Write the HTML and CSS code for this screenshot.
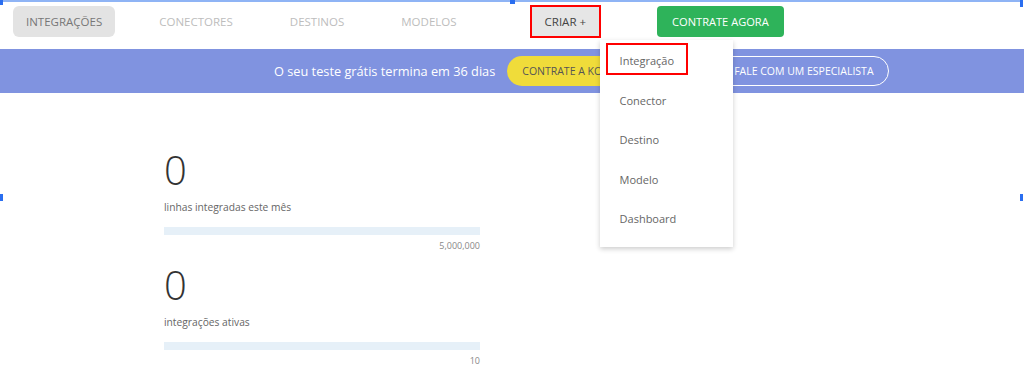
FILE: index.html
```html
<!DOCTYPE html>
<html lang="pt-BR">
<head>
    <meta charset="UTF-8">
    <title>Kondado</title>
    <link rel="stylesheet" href="styles.css">
</head>
<body>

    <div class="topbar">
        <a class="nav-link active">INTEGRAÇÕES</a>
        <a class="nav-link">CONECTORES</a>
        <a class="nav-link">DESTINOS</a>
        <a class="nav-link">MODELOS</a>
        <div class="criar-wrap">
            <button class="btn-criar mark">CRIAR +</button>
            <!-- menu aberto -->
            <div class="dropdown">
                <a class="dropdown-item mark">Integração</a>
                <a class="dropdown-item">Conector</a>
                <a class="dropdown-item">Destino</a>
                <a class="dropdown-item">Modelo</a>
                <a class="dropdown-item">Dashboard</a>
            </div>
        </div>
        <button class="btn-contrate">CONTRATE AGORA</button>
    </div>

    <div class="trial-banner">
        <span class="trial-text">O seu teste grátis termina em 36 dias</span>
        <button class="btn-yellow">CONTRATE A KONDADO</button>
        <button class="btn-outline">FALE COM UM ESPECIALISTA</button>
    </div>

    <div class="stats">
        <div class="stat">
            <div class="stat-number">0</div>
            <div class="stat-label">linhas integradas este mês</div>
            <div class="stat-bar"><div class="stat-fill" style="width: 0%;"></div></div>
            <div class="stat-limit">5,000,000</div>
        </div>
        <div class="stat">
            <div class="stat-number">0</div>
            <div class="stat-label">integrações ativas</div>
            <div class="stat-bar"><div class="stat-fill" style="width: 0%;"></div></div>
            <div class="stat-limit">10</div>
        </div>
    </div>

    <!-- moldura de seleção -->
    <div class="sel-frame">
        <span class="handle h-tl"></span>
        <span class="handle h-tm"></span>
        <span class="handle h-tr"></span>
        <span class="handle h-ml"></span>
        <span class="handle h-mr"></span>
    </div>

</body>
</html>
```

FILE: styles.css
```css
/* base */
body {
    margin: 0;
    font-family: "Open Sans", "Liberation Sans", sans-serif;
    background: #fff;
    position: relative;
    height: 388px;
    overflow: hidden;
}

/* barra superior */
.topbar {
    height: 49px;
    display: flex;
    align-items: flex-start;
    padding: 6px 0 0 13px;
    box-sizing: border-box;
}

.nav-link {
    font-size: 11.5px;
    color: #bdbdbd;
    height: 31px;
    line-height: 31px;
    padding: 0 13px;
    margin-right: 31px;
    border-radius: 6px;
}

.nav-link.active {
    background-color: #e3e3e3;
    color: #777;
}

.criar-wrap {
    position: relative;
    margin-left: 29px;
}

.btn-criar {
    font-family: inherit;
    font-size: 11.5px;
    color: #444;
    background-color: #e6e6e6;
    border: none;
    height: 33px;
    padding: 0 15px;
    margin-top: -1px;
}

.mark {
    outline: 2px solid #ff0000;
    outline-offset: -2px;
}

.btn-contrate {
    font-family: inherit;
    font-size: 11.1px;
    color: #fff;
    background-color: #2eb35a;
    border: none;
    border-radius: 4px;
    height: 31px;
    padding: 0 15px;
    margin-left: 56px;
}

/* menu suspenso */
.dropdown {
    position: absolute;
    top: 34px;
    left: 70px;
    width: 133px;
    padding: 3px 0 6px;
    background: #fff;
    box-shadow: 0 2px 5px rgba(0, 0, 0, 0.2);
    z-index: 5;
}

.dropdown-item {
    display: block;
    font-size: 11px;
    color: #666;
    height: 32px;
    line-height: 36px;
    padding-left: 14px;
    margin: 0 45px 7.5px 6px;
    box-sizing: border-box;
}

.dropdown-item:not(.mark) {
    margin-right: 0;
}

/* faixa de teste */
.trial-banner {
    height: 44px;
    background-color: #8093e0;
    display: flex;
    align-items: center;
    padding-left: 274px;
}

.trial-text {
    color: #fff;
    font-size: 12.75px;
    margin-right: 12px;
}

.btn-yellow {
    font-family: inherit;
    font-size: 10.5px;
    color: #555;
    background-color: #f0dc3a;
    border: none;
    border-radius: 15px;
    height: 30px;
    padding: 0 15px;
}

.btn-outline {
    font-family: inherit;
    font-size: 10.5px;
    color: #fff;
    background: transparent;
    border: 1px solid #fff;
    border-radius: 15px;
    height: 30px;
    padding: 0 14px 0 18px;
    margin-left: 60px;
}

/* numeros */
.stats {
    width: 316px;
    margin-left: 164px;
    padding-top: 53px;
}

.stat {
    margin-bottom: 9px;
}

.stat-number {
    font-size: 40px;
    font-weight: 300;
    color: #333;
    line-height: 48px;
}

.stat-label {
    font-size: 10.25px;
    color: #666;
    margin-top: 6px;
}

.stat-bar {
    height: 8px;
    background-color: #e6f0f8;
    margin-top: 13px;
}

.stat-fill {
    height: 100%;
    background-color: #8093e0;
}

.stat-limit {
    text-align: right;
    font-size: 9px;
    color: #888;
    margin-top: 4px;
}

/* moldura de seleção */
.sel-frame {
    position: absolute;
    left: 0;
    top: 0;
    width: 1021px;
    height: 196px;
    border-top: 2px solid #8fb4f5;
    box-sizing: border-box;
    pointer-events: none;
}

.handle {
    position: absolute;
    width: 3px;
    height: 5px;
    background-color: #2a6ef0;
}

.h-tl { left: 0; top: -2px; }
.h-tm { left: 510px; top: -2px; width: 5px; height: 4px; }
.h-tr { right: -2px; top: -2px; height: 7px; }
.h-ml { left: 0; top: 192px; height: 7px; }
.h-mr { right: -2px; top: 192px; height: 7px; }
```
